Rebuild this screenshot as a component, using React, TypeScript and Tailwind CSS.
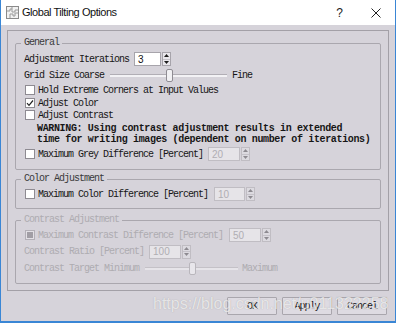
import React from 'react';

const mono = "font-['Liberation_Mono','DejaVu_Sans_Mono',monospace] text-[10px] tracking-[-1px]";

function CheckBox({ checked, disabled }: { checked?: boolean; disabled?: boolean }) {
  if (disabled) {
    return (
      <span className="w-[10px] h-[10px] shrink-0 border border-[#b3b0b7] bg-[#e2e0e5] flex items-center justify-center">
        <span className="w-[6px] h-[6px] bg-[#a19ea5]" />
      </span>
    );
  }
  return (
    <span className="w-[10px] h-[10px] shrink-0 border border-[#8e8b92] bg-white flex items-center justify-center">
      {checked && (
        <svg width="8" height="8" viewBox="0 0 8 8">
          <path d="M1 4.2 L3 6.3 L7 1.5" fill="none" stroke="#222" strokeWidth="1.2" />
        </svg>
      )}
    </span>
  );
}

function Spin({ value, box, disabled }: { value: string; box: string; disabled?: boolean }) {
  const arrow = disabled ? '#8d8a90' : '#1c1c1c';
  return (
    <div className="flex h-[14px] gap-[1px]">
      <div
        className={`${box} h-full border flex items-center pl-[3px] tracking-normal font-['Liberation_Sans',sans-serif] text-[10px] ${
          disabled ? 'border-[#c0bdc3] bg-[#e6e4e8] text-[#b0aeb3]' : 'border-[#a7a4ab] bg-white text-[#111]'
        }`}
      >
        {value}
      </div>
      <div
        className={`w-[9px] h-full border flex flex-col ${
          disabled ? 'border-[#c0bdc3] bg-[#dcdae0]' : 'border-[#a7a4ab] bg-[#e9e7ec]'
        }`}
      >
        <div className="flex-1 flex items-center justify-center border-b border-[#c5c2c9]">
          <svg width="5" height="3" viewBox="0 0 5 3">
            <path d="M0 3 L2.5 0 L5 3 Z" fill={arrow} />
          </svg>
        </div>
        <div className="flex-1 flex items-center justify-center">
          <svg width="5" height="3" viewBox="0 0 5 3">
            <path d="M0 0 L2.5 3 L5 0 Z" fill={arrow} />
          </svg>
        </div>
      </div>
    </div>
  );
}

function Slider({ groove, left, disabled }: { groove: string; left: string; disabled?: boolean }) {
  return (
    <div className={`${groove} relative h-[13px] flex items-center`}>
      <div className={`w-full h-[3px] border-t ${disabled ? 'border-[#c4c1c7] bg-[#e6e4e9]' : 'border-[#b1aeb5] bg-[#f3f2f5]'}`} />
      <div
        className={`absolute top-0 ${left} w-[7px] h-[13px] rounded-[2px] border ${
          disabled ? 'border-[#b9b6bc] bg-[#e8e6eb]' : 'border-[#8f8c93] bg-[#f1f0f3]'
        }`}
      />
    </div>
  );
}

function Group({
  title,
  disabled,
  className,
  children,
}: {
  title: string;
  disabled?: boolean;
  className: string;
  children: React.ReactNode;
}) {
  return (
    <fieldset className={`border border-[#aaa7ae] rounded-[2px] px-[8px] ${className}`}>
      <legend className={`-ml-[3px] px-[3px] leading-[12px] ${disabled ? 'text-[#aeacb1]' : 'text-[#3a3a3a]'}`}>
        {title}
      </legend>
      {children}
    </fieldset>
  );
}

export default function App() {
  const off = 'text-[#aeacb1]';
  return (
    <div className={`relative w-[396px] h-[323px] flex flex-col overflow-hidden bg-[#d6d3da] border-x border-b-2 border-[#3a86d5] text-[#161616] ${mono}`}>
      {/* title bar */}
      <div className="h-[25px] shrink-0 bg-white flex items-center font-['Liberation_Sans',sans-serif] tracking-normal">
        <svg className="ml-[5px]" width="13" height="13" viewBox="0 0 13 13">
          <rect x="0.5" y="0.5" width="12" height="12" fill="#f2f2f2" stroke="#8a8a8a" />
          <path d="M1 5 H4 V3 H6 V6 H9 V4 H12 M4 12 V8 H7 V10 H9 V7 H12 M6 1 V3" fill="none" stroke="#9a9a9a" strokeWidth="1" />
        </svg>
        <span className="ml-[3px] text-[11px] tracking-[-0.45px] text-[#111]">Global Tilting Options</span>
        <span className="ml-auto mr-[28px] text-[12px] text-[#222]">?</span>
        <svg className="mr-[14px]" width="10" height="10" viewBox="0 0 10 10">
          <path d="M0.5 0.5 L9.5 9.5 M9.5 0.5 L0.5 9.5" stroke="#222" strokeWidth="1" />
        </svg>
      </div>

      <div className="flex-1 flex flex-col px-[6px] pt-[5px]">
        <div className="h-[261px] shrink-0 border border-[#a3a0a7] px-[7px] pt-[6px] flex flex-col">
          <Group title="General" className="pt-[2px] pb-[8px]">
            <div className="h-[16px] flex items-center gap-[5px]">
              <span>Adjustment Iterations</span>
              <Spin value="3" box="w-[27px]" />
            </div>
            <div className="h-[16px] flex items-center">
              <span>Grid Size Coarse</span>
              <div className="ml-[6px]">
                <Slider groove="w-[117px]" left="left-[56px]" />
              </div>
              <span className="ml-[5px]">Fine</span>
            </div>
            <div className="h-[14px] flex items-center gap-[3px] pl-[1px]">
              <CheckBox />
              <span>Hold Extreme Corners at Input Values</span>
            </div>
            <div className="h-[12px] flex items-center gap-[3px] pl-[1px]">
              <CheckBox checked />
              <span>Adjust Color</span>
            </div>
            <div className="h-[12px] flex items-center gap-[3px] pl-[1px]">
              <CheckBox />
              <span>Adjust Contrast</span>
            </div>
            <div className="mt-[2px] pl-[13px] leading-[11px] font-bold tracking-[-0.35px] whitespace-nowrap">
              <div>WARNING: Using contrast adjustment results in extended</div>
              <div>time for writing images (dependent on number of iterations)</div>
            </div>
            <div className="mt-[2px] h-[14px] flex items-center gap-[3px] pl-[1px]">
              <CheckBox />
              <span>Maximum Grey Difference [Percent]</span>
              <div className="ml-[2px]">
                <Spin value="20" box="w-[32px]" disabled />
              </div>
            </div>
          </Group>

          <Group title="Color Adjustment" className="mt-[3px] pt-[1px] pb-[6px]">
            <div className="h-[16px] flex items-center gap-[3px] pl-[1px]">
              <CheckBox />
              <span>Maximum Color Difference [Percent]</span>
              <div className="ml-[3px]">
                <Spin value="10" box="w-[31px]" disabled />
              </div>
            </div>
          </Group>

          <Group title="Contrast Adjustment" disabled className="mt-[5px] pt-[1px] pb-[7px]">
            <div className={`h-[16px] flex items-center gap-[3px] pl-[1px] ${off}`}>
              <CheckBox disabled />
              <span>Maximum Contrast Difference [Percent]</span>
              <div className="ml-[3px]">
                <Spin value="50" box="w-[32px]" disabled />
              </div>
            </div>
            <div className={`h-[17px] flex items-center gap-[5px] ${off}`}>
              <span>Contrast Ratio [Percent]</span>
              <Spin value="100" box="w-[32px]" disabled />
            </div>
            <div className={`h-[16px] flex items-center ${off}`}>
              <span>Contrast Target Minimum</span>
              <div className="ml-[6px]">
                <Slider groove="w-[93px]" left="left-[44px]" disabled />
              </div>
              <span className="ml-[4px]">Maximum</span>
            </div>
          </Group>
        </div>

        <div className="mt-[6px] flex justify-end gap-[5px] pr-[2px]">
          {['OK', 'Apply', 'Cancel'].map((b) => (
            <button
              key={b}
              className="w-[50px] h-[18px] border border-[#a9a6ad] bg-[#dedbe2] rounded-[1px] flex items-center justify-center text-[#161616]"
            >
              {b}
            </button>
          ))}
        </div>
      </div>

      <div className="absolute left-[152px] top-[292px] font-['Liberation_Sans',sans-serif] tracking-normal text-[16px] text-white/70 [text-shadow:0_0_1px_rgba(120,120,120,0.5)] pointer-events-none">
        https://blog.csdn.net/u011322258
      </div>
    </div>
  );
}
